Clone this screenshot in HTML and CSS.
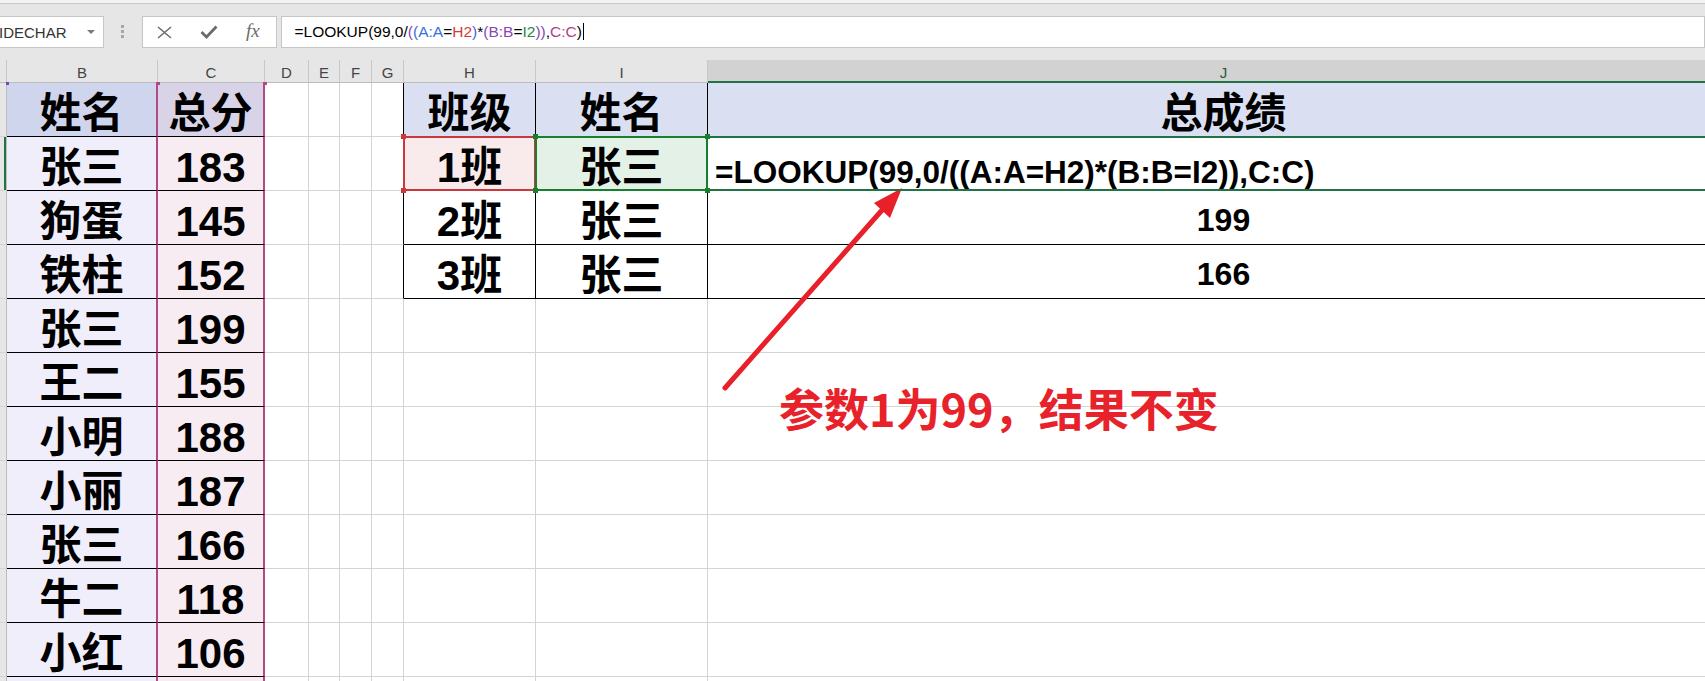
FILE: index.html
```html
<!DOCTYPE html>
<html lang="zh-CN">
<head>
  <meta charset="UTF-8" />
  <meta name="viewport" content="width=device-width, initial-scale=1" />
  <title>LOOKUP 多条件查找</title>
  <link rel="stylesheet" href="styles.css">
</head>
<body>

  <div class="app">
    <div class="top-strip"></div>

    <div class="formula-bar">
      <div class="name-box">
        <span>IDECHAR</span>
        <i class="drop"></i>
      </div>
      <div class="grip"><i></i><i></i><i></i></div>
      <div class="fx-buttons">
        <span class="fx-btn">
          <svg width="15" height="13" viewBox="0 0 15 13"><path d="M1 1 L14 12 M14 1 L1 12" stroke="#6b6b6b" stroke-width="1.5" fill="none"/></svg>
        </span>
        <span class="fx-btn">
          <svg width="18" height="14" viewBox="0 0 18 14"><path d="M1.5 7 L6.5 12 L16.5 1.5" stroke="#6b6b6b" stroke-width="2.8" fill="none"/></svg>
        </span>
        <span class="fx-btn fx-label">fx</span>
      </div>
      <div class="formula-input">=LOOKUP(99,0/<span class="k-purple">(</span><span class="k-blue">(A:A</span>=<span class="k-red">H2</span><span class="k-blue">)</span>*<span class="k-purple">(B:B</span>=<span class="k-green">I2</span><span class="k-purple">))</span>,<span class="k-magenta">C:C</span>)<span class="caret"></span></div>
    </div>

    <div class="sheet" id="sheet">
      <!-- cells injected via JS -->
    </div>

    <!-- annotation -->
    <svg class="arrow" width="1705" height="681" viewBox="0 0 1705 681">
      <line x1="725" y1="388" x2="883" y2="209" stroke="#e8202a" stroke-width="5" stroke-linecap="round"/>
      <polygon points="902,188 890,218 874,203" fill="#e8202a"/>
    </svg>
    <div class="note">参数1为99，结果不变</div>
  </div>

  <script>
    const cols = ['B', 'C', 'D', 'E', 'F', 'G', 'H', 'I', 'J'];
    const scores = [
      ['姓名', '总分'],
      ['张三', '183'],
      ['狗蛋', '145'],
      ['铁柱', '152'],
      ['张三', '199'],
      ['王二', '155'],
      ['小明', '188'],
      ['小丽', '187'],
      ['张三', '166'],
      ['牛二', '118'],
      ['小红', '106'],
      ['', '']
    ];
    const lookup = [
      ['班级', '姓名', '总成绩'],
      ['1班', '张三', '=LOOKUP(99,0/((A:A=H2)*(B:B=I2)),C:C)'],
      ['2班', '张三', '199'],
      ['3班', '张三', '166']
    ];

    const sheet = document.getElementById('sheet');

    function cell(cls, text) {
      const d = document.createElement('div');
      d.className = 'cell ' + cls;
      d.textContent = text || '';
      sheet.appendChild(d);
      return d;
    }

    function ref(target, color) {
      const box = document.createElement('div');
      box.className = 'ref ' + color;
      box.innerHTML = color === 'active' ? '' :
        '<i class="h tl"></i><i class="h tr"></i><i class="h bl"></i><i class="h br"></i>';
      target.classList.add('pick-' + color);
      target.appendChild(box);
    }

    // column headers
    cell('col-head corner');
    cols.forEach(c => cell('col-head' + (c === 'J' ? ' selected' : ''), c));

    scores.forEach((pair, i) => {
      const r = i + 1;
      const head = r === 1 ? ' head' : '';
      cell('row-head' + (r === 2 ? ' active' : ''));
      const b = cell('name' + head, pair[0]);
      const c = cell('score' + head, pair[1]);
      cell('');
      cell('');
      cell('');
      cell(r <= 4 ? 'edge' : '');

      const t = lookup[i];
      const h = cell(t ? 'tbl' + head : '', t ? t[0] : '');
      const n = cell(t ? 'tbl' + head : '', t ? t[1] : '');
      const j = cell(t ? 'tbl total' + head : '', t ? t[2] : '');

      if (r === 1) {
        b.innerHTML += '<i class="mark purple"></i>';
        c.innerHTML += '<i class="mark magenta left"></i><i class="mark magenta right"></i>';
      }
      if (r === 2) {
        ref(h, 'red');
        ref(n, 'green');
        ref(j, 'active');
        j.classList.add('formula');
      }
    });
  </script>

</body>
</html>
```

FILE: styles.css
```css
  body {
    margin: 0;
    background-color: #fff;
    font-family: "Liberation Sans", "Noto Sans CJK SC", sans-serif;
  }
  .app {
    position: relative;
    width: 1705px;
    height: 681px;
    overflow: hidden;
  }
  .top-strip {
    height: 3px;
    background: #f3f3f3;
    border-bottom: 1px solid #c8c8c8;
  }
  /* Formula bar */
  .formula-bar {
    height: 56px;
    box-sizing: border-box;
    padding-top: 12px;
    background: #e6e6e6;
    display: flex;
    align-items: flex-start;
  }
  .name-box {
    width: 107px;
    height: 32px;
    margin-left: -2px;
    box-sizing: border-box;
    border: 1px solid #c6c6c6;
    background: #fff;
    display: flex;
    align-items: center;
    justify-content: space-between;
    padding-right: 8px;
    font-size: 15px;
    color: #333;
  }
  .drop {
    width: 0;
    height: 0;
    border-left: 4px solid transparent;
    border-right: 4px solid transparent;
    border-top: 4px solid #7a7a7a;
  }
  .grip {
    display: flex;
    flex-direction: column;
    gap: 2px;
    margin: 9px 0 0 17px;
  }
  .grip i {
    width: 3px;
    height: 3px;
    background: #a6a6a6;
  }
  .fx-buttons {
    width: 136px;
    height: 32px;
    margin-left: 18px;
    box-sizing: border-box;
    border: 1px solid #c6c6c6;
    background: #fff;
    display: flex;
  }
  .fx-btn {
    width: 44px;
    display: flex;
    align-items: center;
    justify-content: center;
  }
  .fx-label {
    font: italic 19px "Liberation Serif", serif;
    color: #6b6b6b;
    padding-bottom: 2px;
  }
  .formula-input {
    width: 1440px;
    height: 32px;
    margin-left: 4px;
    box-sizing: border-box;
    border: 1px solid #c6c6c6;
    background: #fff;
    padding-left: 13px;
    font-size: 15.5px;
    line-height: 30px;
    color: #000;
    white-space: nowrap;
  }
  .k-blue { color: #3a6fd8; }
  .k-red { color: #d63a3a; }
  .k-purple { color: #8a46b8; }
  .k-green { color: #1f8a3c; }
  .k-magenta { color: #b23f8c; }
  .caret {
    display: inline-block;
    width: 1px;
    height: 17px;
    background: #000;
    margin-left: 1px;
    vertical-align: -3px;
  }
  /* Sheet grid */
  .sheet {
    display: grid;
    grid-template-columns: 7px 151px 107px 44px 31px 32px 32px 132px 172px 1032px;
    grid-template-rows: 23px repeat(12, 54px);
    font-weight: 700;
    font-size: 42px;
    color: #000;
  }
  .cell {
    position: relative;
    box-sizing: border-box;
    border-right: 1px solid #d4d4d4;
    border-bottom: 1px solid #d4d4d4;
    padding-top: 10px;
    line-height: 42px;
    text-align: center;
    white-space: nowrap;
  }
  .col-head {
    background: #e6e6e6;
    border-right-color: #c8c8c8;
    border-bottom-color: #bcbcbc;
    font-weight: 400;
    font-size: 15px;
    line-height: 20px;
    padding-top: 3px;
    color: #444;
  }
  .col-head.selected {
    background: #d2d2d2;
    border-bottom: 2px solid #217346;
    color: #1f5f3a;
  }
  .row-head {
    background: #e6e6e6;
    border-right-color: #bcbcbc;
  }
  .row-head.active {
    box-shadow: inset -2px 0 0 #217346;
  }
  .name, .score {
    border-bottom-color: #000;
    border-right: 2px solid #b04a87;
  }
  .name { background: #f0eefa; }
  .score { background: #f7ecf2; }
  .name.head { background: #d0d5ee; }
  .score.head { background: #d8d3e6; }
  .edge { border-right-color: #000; }
  .tbl {
    border-right-color: #000;
    border-bottom-color: #000;
  }
  .tbl.head { background: #dae0f2; }
  .pick-red { background: #f9ebeb; }
  .pick-green { background: #e4f1e6; }
  .total {
    font-size: 32px;
    line-height: 32px;
    padding-top: 13px;
  }
  .total.head {
    font-size: 42px;
    line-height: 42px;
    padding-top: 10px;
  }
  .total.formula {
    font-size: 31.5px;
    text-align: left;
    padding-top: 19px;
    padding-left: 7px;
  }
  /* Reference highlights */
  .ref {
    position: absolute;
    top: -1px;
    left: -1px;
    right: -1px;
    bottom: -1px;
    border: 2px solid;
    z-index: 2;
  }
  .ref.red { border-color: #c8383d; color: #c8383d; }
  .ref.green { border-color: #17802f; color: #17802f; }
  .ref.active { border-color: #217346; border-left: none; right: -40px; z-index: 1; }
  .ref .h {
    position: absolute;
    width: 5px;
    height: 5px;
    background: currentColor;
  }
  .h.tl { left: -4px; top: -4px; }
  .h.tr { right: -4px; top: -4px; }
  .h.bl { left: -4px; bottom: -4px; }
  .h.br { right: -4px; bottom: -4px; }
  .mark {
    position: absolute;
    top: -1px;
    width: 4px;
    height: 3px;
  }
  .mark.purple { left: -1px; width: 3px; background: #7a44b0; }
  .mark.magenta { background: #b04a87; }
  .mark.left { left: -2px; }
  .mark.right { right: -4px; }
  /* Annotation */
  .arrow {
    position: absolute;
    left: 0;
    top: 0;
    pointer-events: none;
  }
  .note {
    position: absolute;
    left: 779px;
    top: 385px;
    font: 700 45px/1 "Noto Sans CJK SC", sans-serif;
    color: #e8222a;
    white-space: nowrap;
  }
```
